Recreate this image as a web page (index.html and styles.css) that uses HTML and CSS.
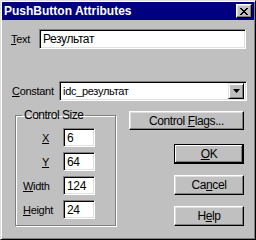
FILE: index.html
```html
<!DOCTYPE html>
<html lang="ru">
<head>
  <meta charset="UTF-8">
  <title>PushButton Attributes</title>
  <link rel="stylesheet" href="styles.css">
</head>
<body>
<div class="window">
  <div class="titlebar">
    <span class="title">PushButton Attributes</span>
    <button class="close" type="button">
      <svg width="8" height="7" viewBox="0 0 8 7"><path d="M0 0h2v1h1v1h2v-1h1v-1h2v1h-1v1h-1v1h-1v1h1v1h1v1h1v1h-2v-1h-1v-1h-2v1h-1v1h-2v-1h1v-1h1v-1h1v-1h-1v-1h-1v-1h-1z" fill="#000"/></svg>
    </button>
  </div>

  <div class="content">
    <div class="row row-text">
      <label class="label label-text"><u>T</u>ext</label>
      <div class="field field-text">Результат</div>
    </div>

    <div class="row row-constant">
      <label class="label label-constant"><u>C</u>onstant</label>
      <div class="field combo">
        <span class="combo-value">idc_результат</span>
        <span class="combo-btn">
          <svg width="7" height="4" viewBox="0 0 7 4"><path d="M0 0h7l-3.5 4z" fill="#000"/></svg>
        </span>
      </div>
    </div>

    <div class="lower">
      <fieldset class="group">
        <legend>Control Size</legend>
        <div class="size-grid">
          <label class="label label-short"><u>X</u></label>
          <div class="field field-small">6</div>
          <label class="label label-short"><u>Y</u></label>
          <div class="field field-small">64</div>
          <label class="label"><u>W</u>idth</label>
          <div class="field field-small">124</div>
          <label class="label"><u>H</u>eight</label>
          <div class="field field-small">24</div>
        </div>
      </fieldset>

      <div class="buttons">
        <button class="btn btn-wide" type="button">Control <u>F</u>lags...</button>
        <button class="btn btn-default" type="button"><u>O</u>K</button>
        <button class="btn" type="button">Ca<u>n</u>cel</button>
        <button class="btn" type="button">H<u>e</u>lp</button>
      </div>
    </div>
  </div>
</div>
</body>
</html>
```

FILE: styles.css
```css
body {
  margin: 0;
  background-color: #c0c0c0;
  font-family: "Liberation Sans", Arial, sans-serif;
  font-size: 11px;
  letter-spacing: -0.3px;
  color: #000;
}

.window {
  box-sizing: border-box;
  width: 256px;
  height: 240px;
  padding: 1px;
  background-color: #c0c0c0;
  border: 1px solid;
  border-color: #dfdfdf #000 #000 #dfdfdf;
  box-shadow: inset 1px 1px #fff, inset -1px -1px #808080;
}

.titlebar {
  display: flex;
  align-items: center;
  justify-content: space-between;
  height: 18px;
  padding: 0 2px 0 2px;
  background-color: #000080;
}

.title {
  font-weight: bold;
  font-size: 12px;
  letter-spacing: 0;
  color: #fff;
}

.close {
  display: flex;
  align-items: center;
  justify-content: center;
  width: 16px;
  height: 14px;
  padding: 0;
  background-color: #c0c0c0;
  border: 1px solid;
  border-color: #fff #000 #000 #fff;
  box-shadow: inset -1px -1px #808080, inset 1px 1px #dfdfdf;
}

.content {
  padding: 9px 8px 0 9px;
}

.row {
  display: flex;
  align-items: center;
  height: 20px;
}

.row-constant {
  margin-top: 32px;
}

.label {
  flex-shrink: 0;
  line-height: 14px;
}

.label-text {
  width: 28px;
}

.label-constant {
  width: 48px;
  padding-left: 1px;
  box-sizing: border-box;
}

.field {
  box-sizing: border-box;
  background-color: #fff;
  border: 1px solid;
  border-color: #808080 #fff #fff #808080;
  box-shadow: inset 1px 1px #000, inset -1px -1px #dfdfdf;
  line-height: 14px;
}

.field-text {
  flex: 1;
  height: 20px;
  padding: 2px 3px;
  font-size: 12px;
  letter-spacing: -0.4px;
}

.combo {
  display: flex;
  align-items: center;
  flex: 1;
  height: 20px;
  padding: 2px 2px 2px 3px;
  margin-right: -1px;
}

.combo-value {
  flex: 1;
}

.combo-btn {
  box-sizing: border-box;
  display: flex;
  align-items: center;
  justify-content: center;
  width: 16px;
  height: 16px;
  background-color: #c0c0c0;
  border: 1px solid;
  border-color: #dfdfdf #000 #000 #dfdfdf;
  box-shadow: inset 1px 1px #fff, inset -1px -1px #808080;
}

.lower {
  display: flex;
  margin-top: 7px;
}

.group {
  width: 101px;
  box-sizing: border-box;
  margin: 0 0 0 4px;
  padding: 6px 0 4px 6px;
  border: 1px solid #808080;
  box-shadow: inset 1px 1px #fff, 1px 1px #fff;
}

.group legend {
  padding: 0 2px;
  line-height: 14px;
  font-size: 12px;
  letter-spacing: -0.5px;
}

.size-grid {
  display: grid;
  grid-template-columns: 40px 32px;
  grid-auto-rows: 19px;
  row-gap: 5px;
  align-items: center;
  margin-left: 1px;
}

.label-short {
  padding-left: 19px;
}

.field-small {
  height: 19px;
  padding: 2px 3px;
  font-size: 12px;
}

.buttons {
  display: flex;
  flex-direction: column;
  align-items: flex-end;
  width: 115px;
  margin-left: 13px;
  padding-top: 3px;
}

.btn {
  box-sizing: border-box;
  width: 70px;
  height: 20px;
  padding: 0;
  margin-top: 11px;
  font-family: inherit;
  font-size: 12px;
  letter-spacing: -0.4px;
  color: #000;
  background-color: #c0c0c0;
  border: 1px solid;
  border-color: #fff #000 #000 #fff;
  box-shadow: inset -1px -1px #808080, inset 1px 1px #dfdfdf;
}

.btn-wide {
  width: 115px;
  height: 19px;
  margin-top: 0;
}

.btn-default {
  margin-top: 14px;
  border: 1px solid #000;
  box-shadow: inset -1px -1px #000, inset 1px 1px #fff, inset -2px -2px #808080;
}
```
